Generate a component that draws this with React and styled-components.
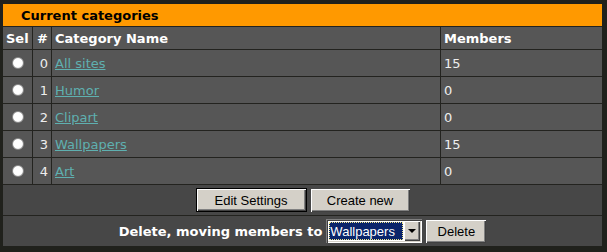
import styled, { createGlobalStyle } from "styled-components";

const GlobalStyle = createGlobalStyle`
    html, body {
        margin: 0;
        padding: 0;
        background: #20211c;
    }
    body {
        font-family: "DejaVu Sans", Verdana, sans-serif;
    }
`;

const categories = [
    { id: 0, name: "All sites", members: 15 },
    { id: 1, name: "Humor", members: 0 },
    { id: 2, name: "Clipart", members: 0 },
    { id: 3, name: "Wallpapers", members: 15 },
    { id: 4, name: "Art", members: 0 },
];

const cols = "29px 18px 388px 1fr";

// the whole category box
const App = () => {
    return (
        <>
            <GlobalStyle />
            <Page>
                <Panel>
                    <Title>Current categories</Title>
                    <Row $h={22}>
                        <HeadCell>Sel</HeadCell>
                        <HeadCell $align="center">#</HeadCell>
                        <HeadCell>Category Name</HeadCell>
                        <HeadCell>Members</HeadCell>
                    </Row>
                    {categories.map((c) => (
                        <Row key={c.id} $h={26}>
                            <Cell $align="center">
                                <Radio type="radio" name="sel" value={c.id} />
                            </Cell>
                            <Cell $align="flex-end">{c.id}</Cell>
                            <Cell>
                                <Link href="#">{c.name}</Link>
                            </Cell>
                            <Cell>{c.members}</Cell>
                        </Row>
                    ))}
                    <ActionRow>
                        <Button $default $w={111}>Edit Settings</Button>
                        <Button $w={99}>Create new</Button>
                    </ActionRow>
                    <ActionRow>
                        <Label>Delete, moving members to</Label>
                        <SelectBox>
                            <Select defaultValue="3">
                                {categories.map((c) => (
                                    <option key={c.id} value={c.id}>{c.name}</option>
                                ))}
                            </Select>
                            <Arrow />
                        </SelectBox>
                        <Button $w={60}>Delete</Button>
                    </ActionRow>
                </Panel>
            </Page>
        </>
    );
};

export default App;

const Page = styled.div`
    padding: 4px 5px 6px 3px;
`;

const Panel = styled.div`
    display: flex;
    flex-direction: column;
    gap: 1px;
    background: #23231f;
`;

const Title = styled.div`
    height: 22px;
    background: #ff9900;
    color: #000;
    font-weight: bold;
    font-size: 13px;
    padding-left: 18px;
    display: flex;
    align-items: center;
`;

const Row = styled.div`
    display: grid;
    grid-template-columns: ${cols};
    gap: 1px;
    height: ${(p) => p.$h}px;
`;

const Cell = styled.div`
    background: #565656;
    color: #eeeeee;
    font-size: 13px;
    display: flex;
    align-items: center;
    justify-content: ${(p) => p.$align || "flex-start"};
    padding: 0 3px;
`;

const HeadCell = styled(Cell)`
    color: #ffffff;
    font-weight: bold;
    font-size: 13px;
    padding: 0 2px 0 3px;
`;

const Link = styled.a`
    color: #5fb0b0;
    text-decoration: underline;
`;

const Radio = styled.input`
    appearance: none;
    margin: 0 0 0 1px;
    width: 12px;
    height: 12px;
    border-radius: 50%;
    border: 1px solid #8a8a8a;
    background: radial-gradient(circle at 45% 40%, #ffffff 55%, #d8d8d8 100%);
`;

const ActionRow = styled.div`
    height: 30px;
    background: #474747;
    display: flex;
    align-items: center;
    justify-content: center;
    gap: 4px;
`;

const Button = styled.button`
    width: ${(p) => p.$w}px;
    height: ${(p) => (p.$default ? 24 : 23)}px;
    padding: 0;
    font-family: "Liberation Sans", Arial, sans-serif;
    font-size: 13px;
    color: #000;
    background: #d4d0c8;
    border: ${(p) => (p.$default ? "1px solid #000" : "none")};
    box-shadow: inset 1px 1px 0 #ffffff, inset -1px -1px 0 #404040,
        inset -2px -2px 0 #808080;
    cursor: pointer;
`;

const Label = styled.span`
    color: #ffffff;
    font-weight: bold;
    font-size: 13px;
`;

const SelectBox = styled.span`
    display: inline-flex;
    align-items: stretch;
    height: 20px;
    padding: 2px;
    background: #ffffff;
    box-shadow: inset 1px 1px 0 #808080, inset 2px 2px 0 #404040,
        inset -1px -1px 0 #ffffff, inset -2px -2px 0 #d4d0c8;
`;

const Select = styled.select`
    appearance: none;
    width: 74px;
    margin: 1px;
    padding: 0 1px;
    border: none;
    outline: 1px dotted #f0e68c;
    outline-offset: -1px;
    background: #0a246a;
    color: #ffffff;
    font-family: "Liberation Sans", Arial, sans-serif;
    font-size: 13px;
`;

const Arrow = styled.span`
    position: relative;
    width: 16px;
    background: #d4d0c8;
    box-shadow: inset 1px 1px 0 #ffffff, inset -1px -1px 0 #404040,
        inset -2px -2px 0 #808080;

    &::after {
        content: "";
        position: absolute;
        left: 4px;
        top: 8px;
        border-left: 4px solid transparent;
        border-right: 4px solid transparent;
        border-top: 4px solid #000;
    }
`;
